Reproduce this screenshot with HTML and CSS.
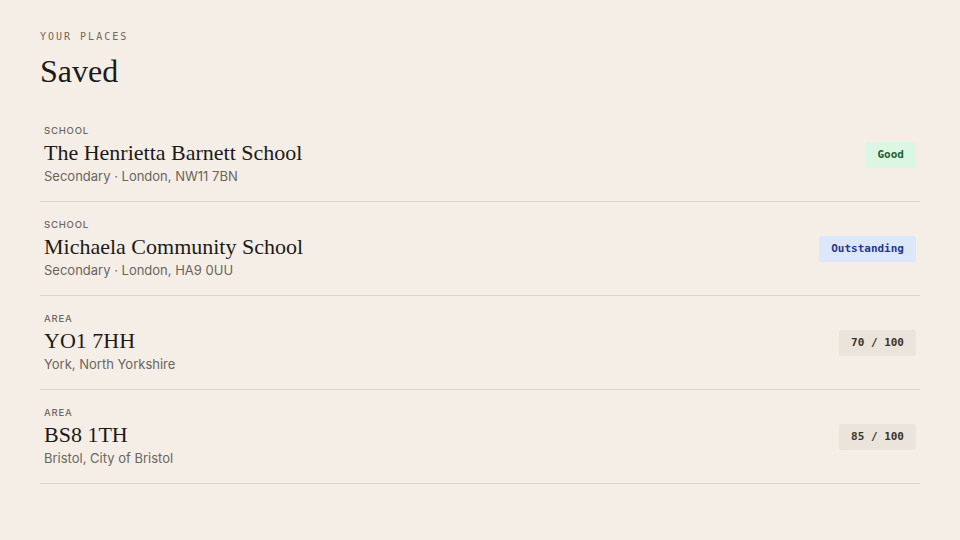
FILE: index.html
```html
<!DOCTYPE html>
<html>

<head>
    <meta charset="UTF-8">
    <title>Saved</title>
    <link rel="stylesheet" href="styles.css">
</head>

<body>
    <div class="page">
        <div class="eyebrow">YOUR PLACES</div>
        <h1 class="title">Saved</h1>
        <ul class="list">
            <li class="row">
                <div class="info">
                    <div class="kind">SCHOOL</div>
                    <div class="name">The Henrietta Barnett School</div>
                    <div class="sub">Secondary · London, NW11 7BN</div>
                </div>
                <span class="badge good">Good</span>
            </li>
            <li class="row">
                <div class="info">
                    <div class="kind">SCHOOL</div>
                    <div class="name">Michaela Community School</div>
                    <div class="sub">Secondary · London, HA9 0UU</div>
                </div>
                <span class="badge outstanding">Outstanding</span>
            </li>
            <li class="row">
                <div class="info">
                    <div class="kind">AREA</div>
                    <div class="name">YO1 7HH</div>
                    <div class="sub">York, North Yorkshire</div>
                </div>
                <span class="badge score">70 / 100</span>
            </li>
            <li class="row">
                <div class="info">
                    <div class="kind">AREA</div>
                    <div class="name">BS8 1TH</div>
                    <div class="sub">Bristol, City of Bristol</div>
                </div>
                <span class="badge score">85 / 100</span>
            </li>
        </ul>
    </div>
</body>

</html>
```

FILE: styles.css
```css
* {
    margin: 0;
    padding: 0;
}
:root {
    --bg: #f4eee7;
    --ink: #1c1a17;
    --muted: #6b655d;
    --line: #dad5ca;
}
body {
    background-color: var(--bg);
    color: var(--ink);
    font-family: Inter, "Liberation Sans", sans-serif;
}
.page {
    padding: 30px 40px 0;
}
/* 顶部小标题 */
.eyebrow {
    font-family: "DejaVu Sans Mono", monospace;
    font-size: 10px;
    letter-spacing: 2px;
    color: #6f685f;
    line-height: 13px;
}
.title {
    font-family: "Liberation Serif", serif;
    font-weight: normal;
    font-size: 32px;
    line-height: 36px;
    margin-top: 10px;
    margin-bottom: 19px;
}
.list {
    list-style: none;
}
/* 每一行：左边信息，右边标签 */
.row {
    display: flex;
    align-items: center;
    justify-content: space-between;
    padding: 16px 4px 15px;
    border-bottom: 1px solid var(--line);
}
.kind {
    font-size: 9.5px;
    letter-spacing: 0.8px;
    font-weight: 500;
    color: #6f685f;
    line-height: 14px;
}
.name {
    font-family: "Liberation Serif", serif;
    font-size: 22px;
    line-height: 26px;
    margin-top: 2px;
}
.sub {
    font-size: 13px;
    line-height: 20px;
    color: var(--muted);
}
.badge {
    font-family: "DejaVu Sans Mono", monospace;
    font-size: 11px;
    font-weight: bold;
    line-height: 26px;
    padding: 0 12px;
    border-radius: 2px;
}
.good {
    background-color: #dbf6e2;
    color: #1f5e36;
}
.outstanding {
    background-color: #dce8fa;
    color: #24398a;
}
.score {
    background-color: #ebe4da;
    color: #3a342d;
}
```
